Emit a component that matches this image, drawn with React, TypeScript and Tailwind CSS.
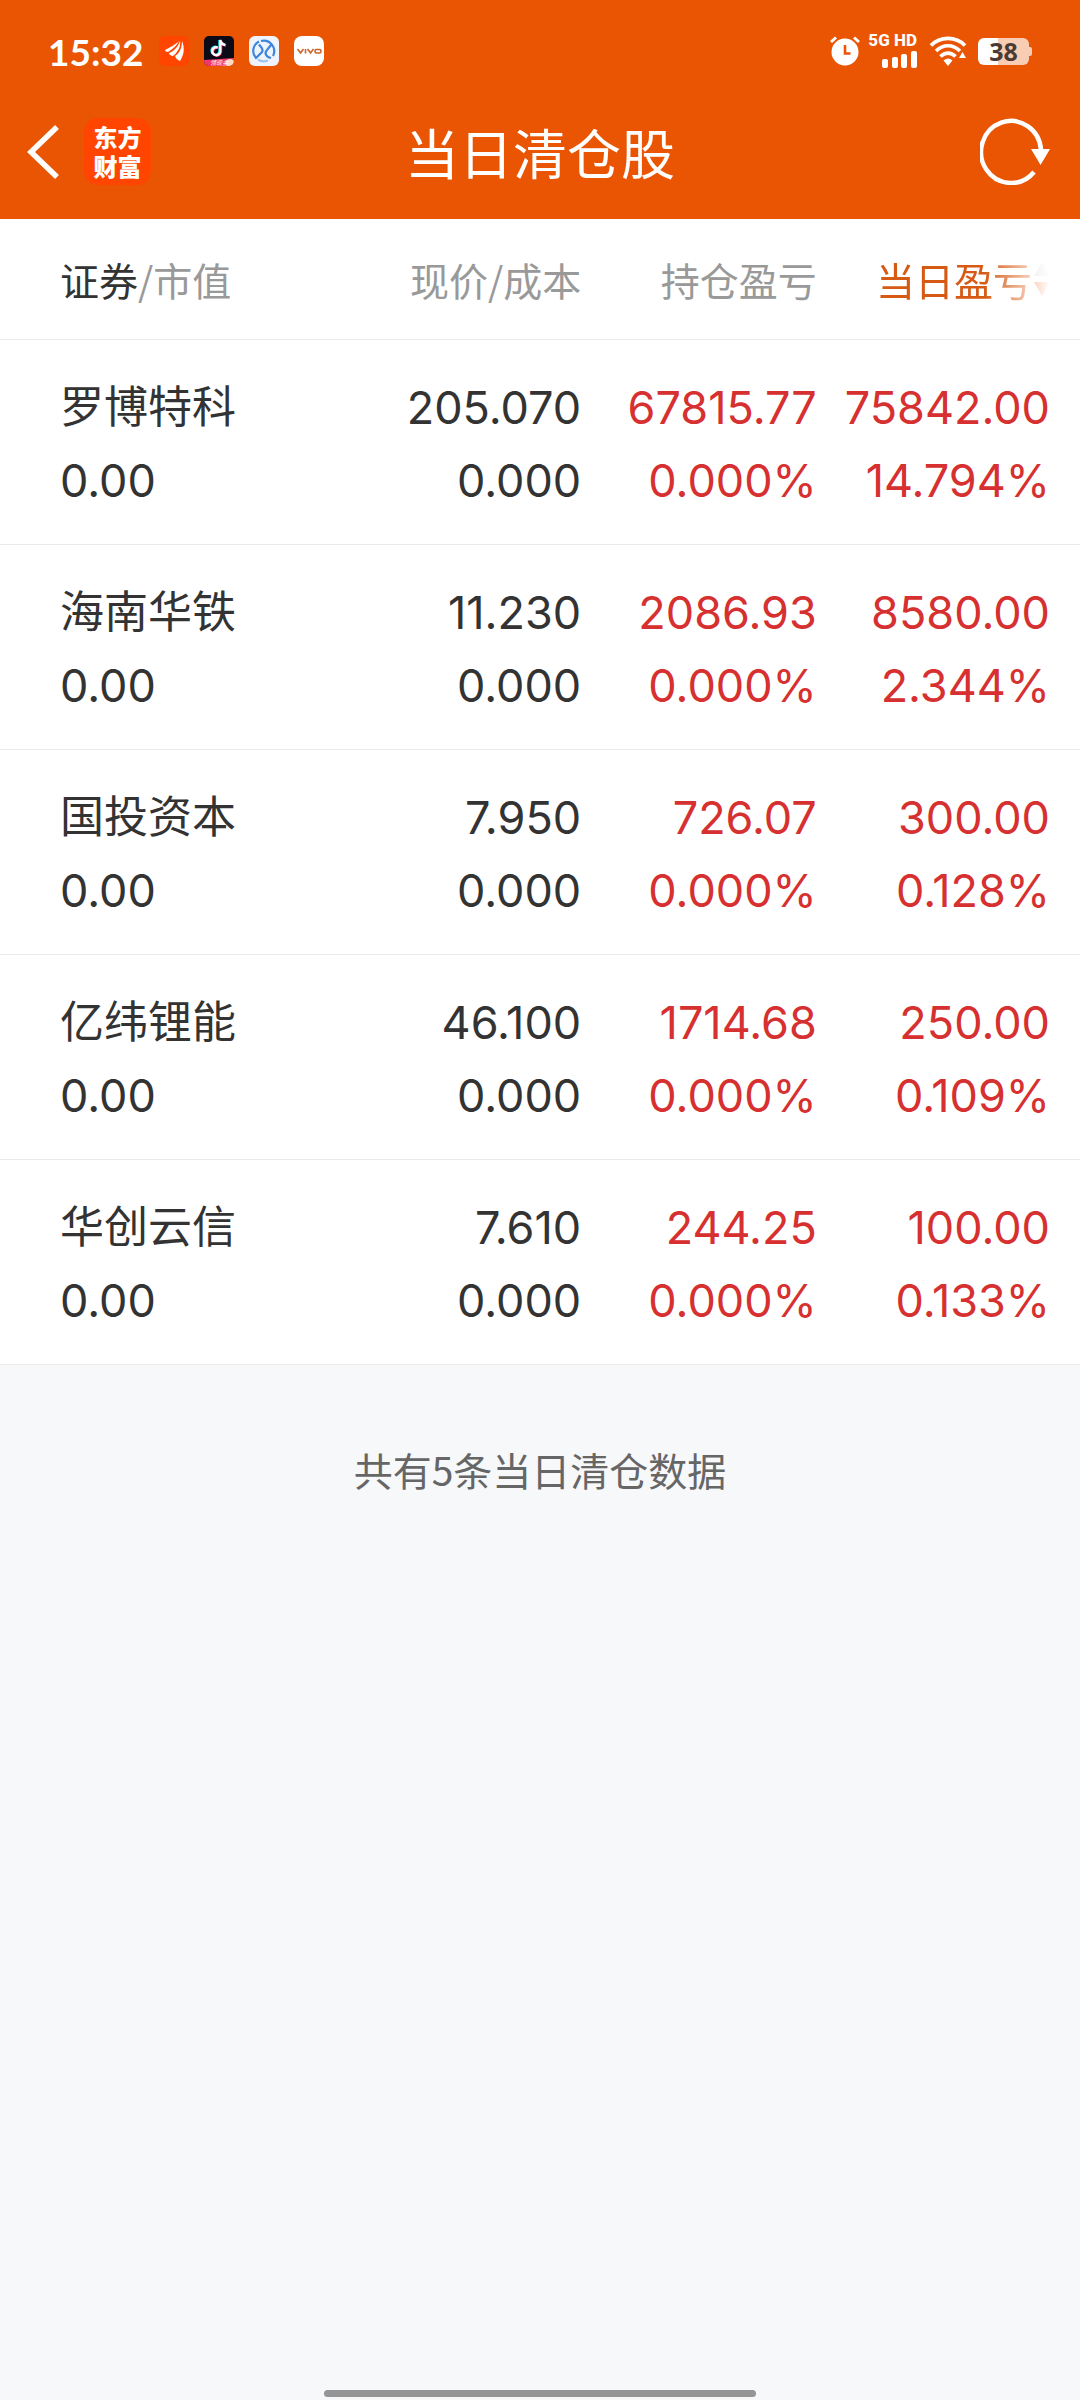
const rows = [
  { name: '罗博特科', value: '0.00', price: '205.070', cost: '0.000', total: '67815.77', totalPct: '0.000%', day: '75842.00', dayPct: '14.794%' },
  { name: '海南华铁', value: '0.00', price: '11.230', cost: '0.000', total: '2086.93', totalPct: '0.000%', day: '8580.00', dayPct: '2.344%' },
  { name: '国投资本', value: '0.00', price: '7.950', cost: '0.000', total: '726.07', totalPct: '0.000%', day: '300.00', dayPct: '0.128%' },
  { name: '亿纬锂能', value: '0.00', price: '46.100', cost: '0.000', total: '1714.68', totalPct: '0.000%', day: '250.00', dayPct: '0.109%' },
  { name: '华创云信', value: '0.00', price: '7.610', cost: '0.000', total: '244.25', totalPct: '0.000%', day: '100.00', dayPct: '0.133%' },
]

function NotificationIcons() {
  return (
    <div className="flex items-center gap-[15px]">
      <svg width="30" height="30" viewBox="0 0 30 30" aria-label="东方财富">
        <rect width="30" height="30" rx="6" fill="#ff4500" />
        <path d="M6 14C11 11 16 9 20 5C18 9 14 13 9 16C7 16 6 15 6 14Z" fill="#fff" />
        <path d="M21 5C22 10 19 16 14 20C12 20 10 18 10 17C15 15 19 11 21 5Z" fill="#fff" />
        <path d="M23 5C26 12 25 19 21 25C18 24 17 22 16 20C21 17 23 11 23 5Z" fill="#fff" />
      </svg>
      <svg width="30" height="30" viewBox="0 0 30 30" aria-label="抖音">
        <defs>
          <clipPath id="dy"><rect width="30" height="30" rx="5" /></clipPath>
        </defs>
        <g clipPath="url(#dy)">
          <rect width="30" height="30" fill="#0b0b18" />
          <g fill="none" strokeWidth="2.4">
            <path d="M13 11A4 4 0 1 0 15.500 15V4C16 7 18 8 20.500 8.500" stroke="#25f4ee" />
            <path d="M14.500 12A4 4 0 1 0 17 16V5C17.500 8 19.500 9 22 9.500" stroke="#fe2c55" />
            <path d="M13.800 11.500A4 4 0 1 0 16.300 15.500V4C16.800 7.500 19 8.500 21.300 9" stroke="#fff" />
          </g>
          <path d="M0 24L30 22V30H0Z" fill="#f0366a" />
          <circle cx="26" cy="27" r="4" fill="#ffd9c0" />
          <text x="6" y="29" fontSize="6" fontStyle="italic" fill="#fff" fontFamily="Noto Sans CJK SC">领现金</text>
        </g>
      </svg>
      <svg width="30" height="30" viewBox="0 0 30 30" aria-label="同花顺">
        <rect width="30" height="30" rx="6" fill="#eef3fc" />
        <g fill="none" stroke="#3d86dc" strokeWidth="2.2">
          <path d="M10 5.500A10.500 10.500 0 0 0 7 22L13 16C15 13 12 11 10 8.500" />
          <path d="M12 5A10.500 10.500 0 0 1 24 20M22 22C17 21 15 17 18 14L22 9" />
          <path d="M9 23.500C11 25 15 26 19 24.500" stroke="#9fc3f0" />
        </g>
      </svg>
      <svg width="30" height="30" viewBox="0 0 30 30" aria-label="vivo">
        <rect width="30" height="30" rx="8" fill="#fff" />
        <g fill="none" stroke="#c8642a" strokeWidth="1.6">
          <path d="M3.500 13L6.500 17L9.500 13M11.500 13V17.500M13.500 13L16.500 17L19.500 13" />
          <rect x="21" y="13.500" width="6" height="3.500" rx="1.500" />
        </g>
      </svg>
    </div>
  )
}

function SystemIcons() {
  return (
    <div className="flex items-center text-white">
      <svg width="30" height="30" viewBox="0 0 30 30" aria-label="闹钟">
        <circle cx="15" cy="16" r="13.500" fill="#fff" />
        <path d="M1 6L6 1.500M29 6L24 1.500" stroke="#fff" strokeWidth="3" />
        <path d="M15 9V17.500H20.500" fill="none" stroke="#ea5504" strokeWidth="2.600" />
      </svg>
      <div className="ml-2 flex flex-col items-end gap-1">
        <span className="font-['Roboto',sans-serif] text-[17px] leading-[13px] font-extrabold">5G HD</span>
        <svg width="36" height="17" viewBox="0 0 36 17" fill="#fff" aria-label="信号">
          <rect x="1" y="8" width="6" height="9" rx="2" />
          <rect x="11" y="6" width="6" height="11" rx="2" />
          <rect x="20" y="3" width="6" height="14" rx="2" />
          <rect x="30" y="0" width="6" height="17" rx="2" />
        </svg>
      </div>
      <svg className="ml-3" width="38" height="30" viewBox="0 0 38 30" aria-label="无线网络">
        <g fill="none" stroke="#fff" strokeWidth="3.600">
          <path d="M2 9.500C11 0 27 0 36 9.500" />
          <path d="M7 15C14 8 24 8 31 15" />
          <path d="M11.500 20.500C16 16 22 16 26.500 20.500" />
        </g>
        <path d="M14.500 24.500Q19 20.500 23.500 24.500L19 30Z" fill="#fff" />
        <path d="M30 22L33.500 16L37 22Z" fill="#fff" />
      </svg>
      <div className="ml-[11px] flex items-center">
        <div className="flex h-[27px] w-[51px] items-center justify-center rounded-[6px] bg-linear-to-r from-white from-40% to-[#f9ccb4] to-40%">
          <span className="font-['Noto_Sans',sans-serif] text-[25px] leading-none font-bold text-[#4a3a34]">38</span>
        </div>
        <div className="h-[9px] w-[3px] rounded-r-[2px] bg-[#f9ccb4]" />
      </div>
    </div>
  )
}

export default function App() {
  return (
    <div className="flex min-h-screen flex-col bg-[#f7f8fa] font-['Noto_Sans_CJK_SC',sans-serif] text-[#333]">
      <header className="bg-[#ea5504] text-white">
        <div className="flex h-[102px] items-center justify-between pr-12 pl-12">
          <div className="flex items-center gap-4">
            <time className="font-['Lato',sans-serif] text-[37px] leading-none font-bold">15:32</time>
            <NotificationIcons />
          </div>
          <SystemIcons />
        </div>
        <nav className="grid h-[117px] grid-cols-[1fr_auto_1fr] items-start">
          <div className="flex items-center gap-6 pt-4 pl-[26px]">
            <button type="button" aria-label="返回">
              <svg width="34" height="56" viewBox="0 0 34 56">
                <path d="M31 3L5 28L31 53" fill="none" stroke="#fff" strokeWidth="5.500" />
              </svg>
            </button>
            <a href="#" className="h-[67px] w-[67px] rounded-[14px] bg-[#ff4500] px-2 pt-1 text-center text-[24px] leading-[29px] font-black">
              东方财富
            </a>
          </div>
          <h1 className="pt-4 text-[54px] leading-[68px]">当日清仓股</h1>
          <div className="flex justify-end pt-[15px] pr-[28px]">
            <button type="button" aria-label="刷新">
              <svg width="72" height="68" viewBox="0 0 72 68">
                <path d="M54 55A30 31 0 1 1 61 33" fill="none" stroke="#fff" strokeWidth="4.500" />
                <path d="M51 32H70L60.500 48Z" fill="#fff" />
              </svg>
            </button>
          </div>
        </nav>
      </header>

      <table className="w-full table-fixed bg-white text-right">
        <thead>
          <tr className="h-[120px] border-b border-[#ebebeb] text-[39px] leading-[48px] text-[#999]">
            <th className="w-[28%] pl-[60px] text-left font-normal">
              <span className="text-[#333]">证券</span>/市值
            </th>
            <th className="w-[26%] pr-0.5 font-normal">现价/成本</th>
            <th className="w-[22%] pr-1 font-normal">持仓盈亏</th>
            <th className="w-[24%] pr-[30px] font-normal">
              <button type="button" className="inline-flex items-center gap-0.5 mask-r-from-62% mask-r-to-100% text-[#d65a14]">
                当日盈亏
                <svg width="16" height="34" viewBox="0 0 16 34" aria-hidden="true">
                  <path d="M0 14L8 0L16 14Z" fill="#ccc" />
                  <path d="M0 20H16L8 34Z" fill="#ea5504" />
                </svg>
              </button>
            </th>
          </tr>
        </thead>
        <tbody className="font-['Inter','Noto_Sans_CJK_SC',sans-serif] text-[45px] leading-[73px]">
          {rows.map((r) => (
            <tr key={r.name} className="h-[205px] border-b border-[#ebebeb]">
              <td className="pt-1 pl-[60px] text-left">
                <div className="text-[44px]">{r.name}</div>
                <div>{r.value}</div>
              </td>
              <td className="pt-1 pr-0.5">
                <div>{r.price}</div>
                <div>{r.cost}</div>
              </td>
              <td className="pt-1 pr-1 text-[#d63030]">
                <div>{r.total}</div>
                <div>{r.totalPct}</div>
              </td>
              <td className="pt-1 pr-[30px] text-[#d63030]">
                <div>{r.day}</div>
                <div>{r.dayPct}</div>
              </td>
            </tr>
          ))}
        </tbody>
      </table>

      <p className="pt-[79px] text-center text-[39px] leading-[50px] text-[#666]">共有{rows.length}条当日清仓数据</p>

      <div className="mx-auto mt-auto mb-[3px] h-[7px] w-[40%] max-w-full rounded-full bg-[#959595]" />
    </div>
  )
}
